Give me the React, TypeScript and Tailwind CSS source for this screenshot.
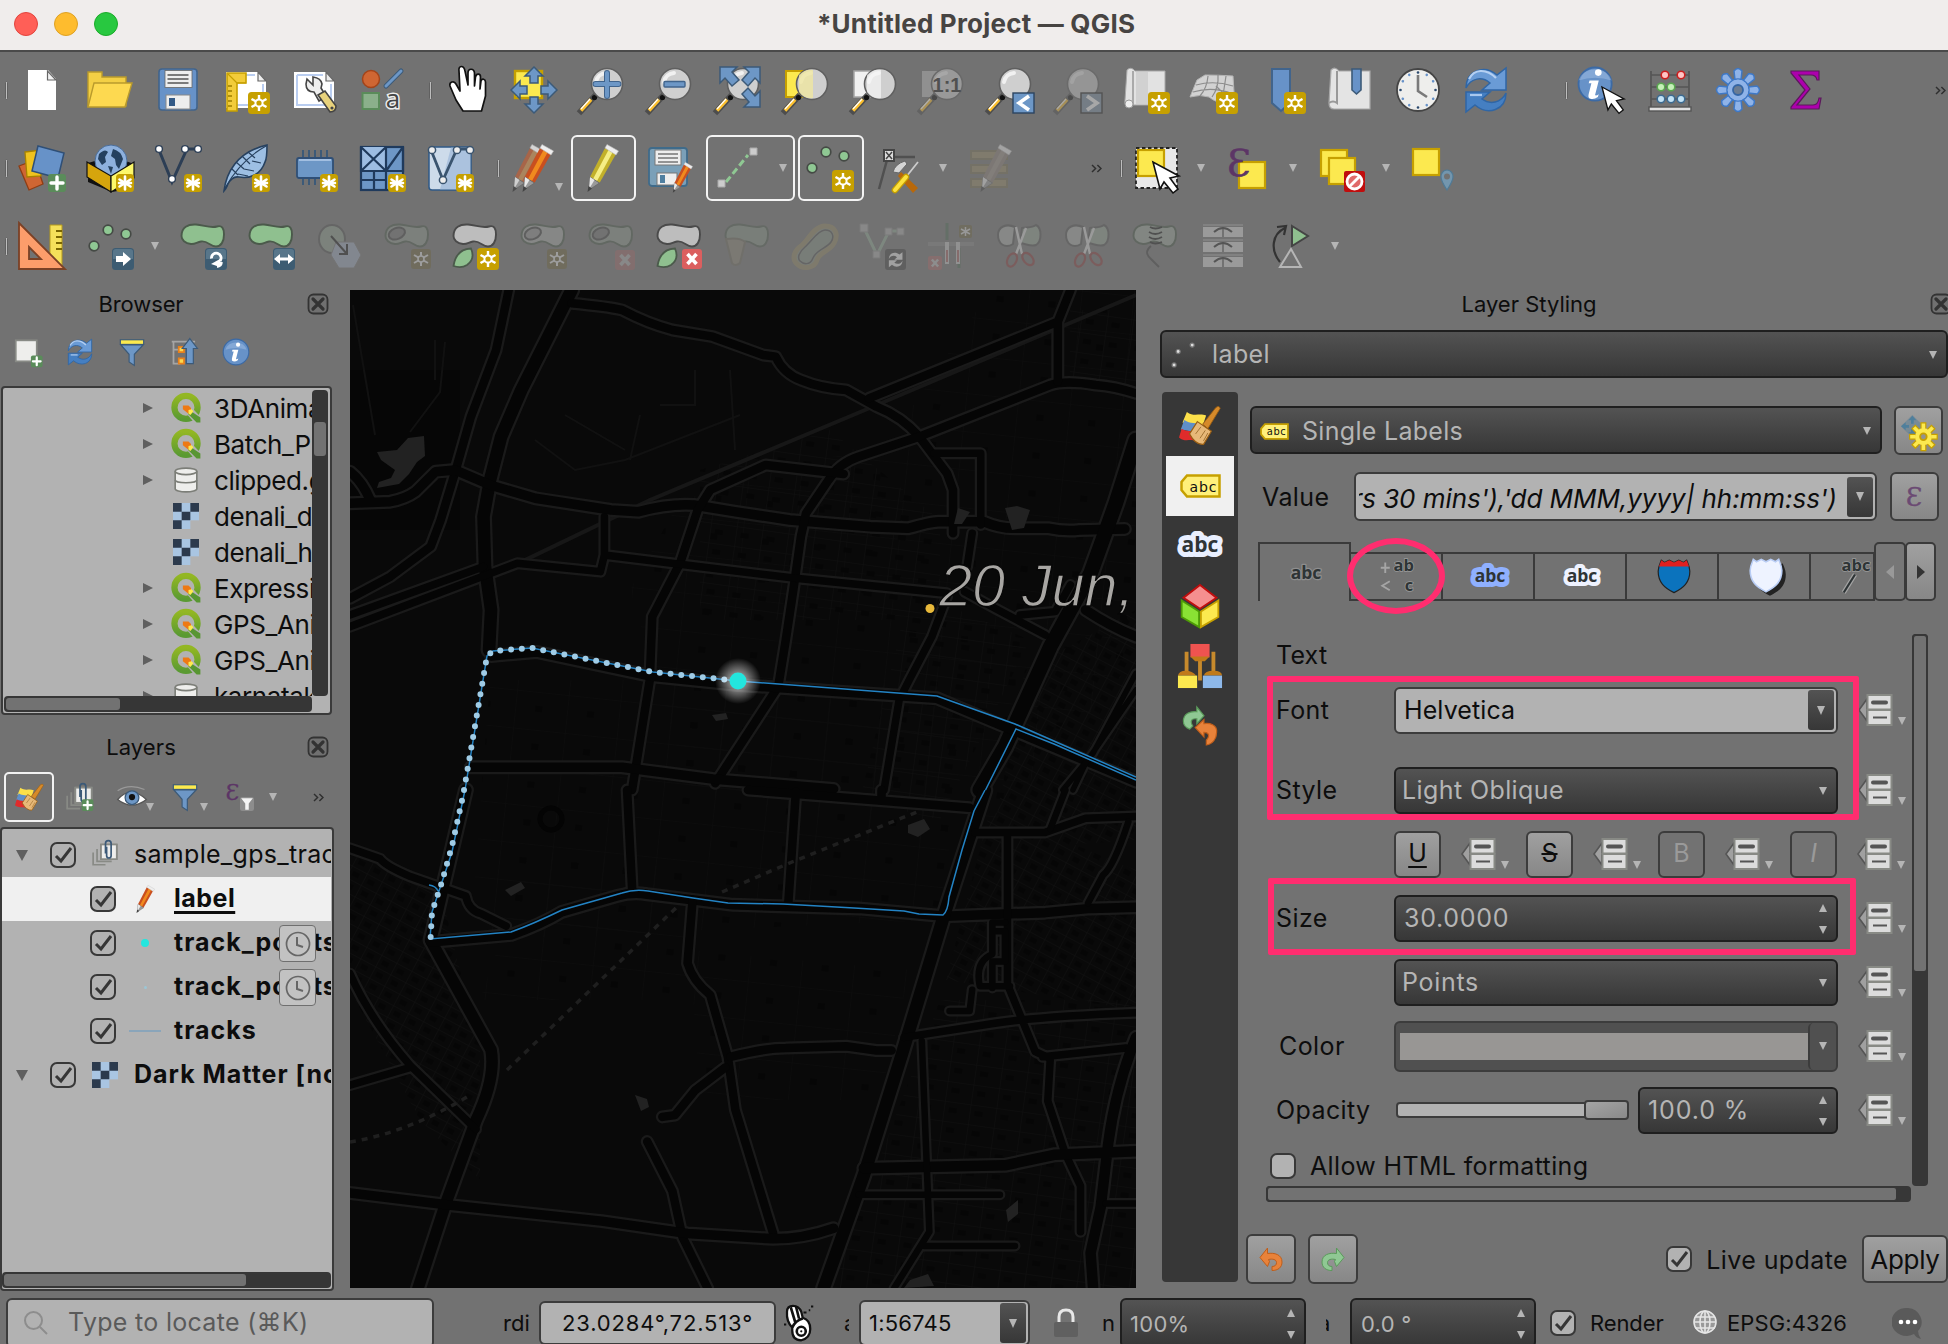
import React from "react";

type N = React.ReactNode;

/* ---------- shared icon pieces ---------- */
const Svg = ({ children, className = "size-12", vb = "0 0 48 48" }: { children: N; className?: string; vb?: string }) => (
  <svg viewBox={vb} className={`${className} shrink-0 overflow-visible`} fill="none">{children}</svg>
);

const Star = ({ x = 26, y = 26, s = 22, o = 1 }: { x?: number; y?: number; s?: number; o?: number }) => (
  <g transform={`translate(${x} ${y}) scale(${s / 22})`} opacity={o}>
    <rect width="22" height="22" rx="3.500" fill="#c6a000" />
    <path d="M11 3v16M3.500 7l15 8M18.500 7l-15 8" stroke="#fff" strokeWidth="2.400" />
    <circle cx="11" cy="11" r="3.600" fill="#c6a000" stroke="#fff" strokeWidth="2" />
  </g>
);
const Aster = () => (
  <g transform="translate(30 30)">
    <rect width="18" height="18" rx="3.500" fill="#c6a000" />
    <path d="M9 2.500v13M3.500 5.500l11 7M14.500 5.500l-11 7M3 9h12" stroke="#fff" strokeWidth="2.600" strokeLinecap="round" />
  </g>
);
const Plus = ({ x, y, s = 18 }: { x: number; y: number; s?: number }) => (
  <g transform={`translate(${x} ${y}) scale(${s / 18})`}>
    <rect width="18" height="18" rx="3" fill="#5a8c5a" />
    <path d="M9 3v12M3 9h12" stroke="#fff" strokeWidth="3.400" strokeLinecap="round" />
  </g>
);
const Lens = ({ children, back, o = 1, cx = 29 }: { children?: N; back?: N; o?: number; cx?: number }) => (
  <g opacity={o}>
    {back}
    <path d="M3 45L16 31" stroke="#4d4d4d" strokeWidth="6" strokeLinecap="square" />
    <path d="M3 44.500L13 33.500" stroke="#fcc02e" strokeWidth="3.600" />
    <path d="M3 43L12 33" stroke="#fff" strokeWidth="1.200" />
    <circle cx="16.500" cy="31.500" r="2.600" fill="#111" />
    <circle cx={cx} cy="18" r="15.500" fill="#cfcfcf" stroke="#5f5f5f" strokeWidth="1.600" />
    <path d={`M${cx - 11} 16a11 11 0 0 1 10-9`} stroke="#fff" strokeWidth="4" strokeLinecap="round" opacity=".7" />
    {children}
  </g>
);
const Page = () => (
  <>
    <path d="M4 6h32l8 9v27H4z" fill="#fff" />
    <path d="M36 6v9h8z" fill="#ededed" stroke="#666" strokeWidth="1.200" />
    <path d="M7 9h26M7 9v30h34V18" stroke="#b9cdf0" strokeWidth="2" />
  </>
);
const Pencil = ({ a = "#c94f1f", b = "#f08a1e", dx = 0, o = 1 }: { a?: string; b?: string; dx?: number; o?: number }) => (
  <g transform={`translate(${dx} 0)`} opacity={o}>
    <path d="M10 33L25 4l11 6L19.500 39z" fill={a} />
    <path d="M13 35L28.500 6l4 2.500L17 37z" fill={b} />
    <path d="M25 4l2-3.500 11.500 6.500-2.500 4z" fill="#eee" stroke="#bbb" strokeWidth=".6" />
    <path d="M10 33l9.500 6L9 46z" fill="#9a9a9a" stroke="#666" strokeWidth=".8" />
    <path d="M10 33l4.500 3L9 45z" fill="#e8e8e8" />
    <path d="M8.500 42l-1 6 4.500-3.500z" fill="#444" />
  </g>
);
const BLOB = "M2.500 14C2.500 5 9 2 17 2.500c8 .5 14 4 21 2 5-1.500 7 2 7 8 0 7-3 12-8 12-6 0-8-6-15-5-4 .5-6 3-10 2.500C6 21.500 2.500 18 2.500 14z";
const LEAF = "M2.500 44C4 34 9 27 20 26.500c3 7 1 13-4 16.500-4 2.500-9 2.500-13.500 1z";
const Blob = ({ f = "#8fc08f", s = "#4b5a4b", o = 1 }: { f?: string; s?: string; o?: number }) => (
  <path d={BLOB} fill={f} stroke={s} strokeWidth="1.900" opacity={o} />
);
const NavyBadge = ({ children, x = 26 }: { children: N; x?: number }) => (
  <g transform={`translate(${x} 26)`}>
    <rect width="22" height="22" rx="3.500" fill="#3d5c72" />
    <path d="M1 3.500Q1 1 4 1h14q3 0 3 2.500V11H1z" fill="#6b879b" opacity=".6" />
    {children}
  </g>
);
const XBadge = ({ x = 26, y = 26, s = 20, o = 1 }: { x?: number; y?: number; s?: number; o?: number }) => (
  <g transform={`translate(${x} ${y}) scale(${s / 20})`} opacity={o}>
    <rect width="20" height="20" rx="3" fill="#db5f5f" />
    <path d="M5.500 5l9 10M14.500 5l-9 10" stroke="#fff" strokeWidth="3.600" />
  </g>
);
const Refresh = () => (
  <>
    <path d="M4 22C4 5 22-2 35 9l9-7v22H20l8-7C20 10 9 12 4 22z" fill="#6a9bd6" stroke="#2f66a6" strokeWidth="1.500" />
    <path d="M7 13C12 3 24 2 34 12" stroke="#b5d0f2" strokeWidth="2.200" />
    <path d="M44 27c0 17-18 23-31 12l-9 7V26h24l-8 7c8 6 19 4 24-6z" fill="#457fc2" stroke="#2f66a6" strokeWidth="1.500" />
    <path d="M8 29h12" stroke="#a9c8ee" strokeWidth="2.200" />
  </>
);
const Funnel = () => (
  <>
    <rect x="4" y="3" width="40" height="8" fill="#fcea4e" stroke="#3c5a78" strokeWidth="2" />
    <path d="M5 12h38L28 28v19l-9-6V28z" fill="#6d97c6" stroke="#3c5a78" strokeWidth="2" />
  </>
);
const Info = ({ r = 22 }: { r?: number }) => (
  <>
    <circle cx="24" cy="24" r={r} fill="#6792c8" stroke="#3c6aa5" strokeWidth="2" />
    <path d="M6 20a19 18 0 0 1 36 0q-18-6-36 0z" fill="#a9c4e6" opacity=".45" />
    <circle cx="27.500" cy="11.500" r="3.600" fill="#fff" />
    <path d="M18 20h10l-4 16q1 1 4-1l-1 3q-4 3-8 2-3-1-2-5l3-12h-3z" fill="#fff" />
  </>
);
const Cursor = ({ x, y, s = 1 }: { x: number; y: number; s?: number }) => (
  <path transform={`translate(${x} ${y}) scale(${s})`} d="M0 0l7 27 4-7 9 11 5-4-8-11 9-2z" fill="#fff" stroke="#111" strokeWidth="1.600" />
);
const Box = ({ x, y }: { x: number; y: number }) => <rect x={x} y={y} width="26" height="26" fill="#fce94f" stroke="#c6a000" strokeWidth="2.200" />;
const Eps = ({ x = 4, y = 32, size = 40, fill = "#5c3566" }: { x?: number; y?: number; size?: number; fill?: string }) => (
  <text x={x} y={y} fontSize={size} fontFamily="DejaVu Serif, serif" fill={fill} stroke={fill} strokeWidth=".6">Ɛ</text>
);
const Brush = () => (
  <>
    <path d="M9 8c8 6 14 1 22 4l-4 12L4 20z" fill="#fce04a" />
    <path d="M6 17c7 5 13 2 22 6l-3 9L2 28z" fill="#5f8fc9" />
    <path d="M3 27c6 4 10 1 18 5l-2 9c-6-3-12 2-19-4z" fill="#e02b2b" />
    <path d="M27 22L42 3q4-3 5 1L33 27z" fill="#d68a2a" stroke="#9a5e12" strokeWidth="1" />
    <path d="M21 19l16 11-9 15q-9 1-16-12z" fill="#e7b878" stroke="#9a5e12" strokeWidth="1.300" />
    <path d="M19 33l6-8M24 38l6-9M28 41l5-9" stroke="#9a6a2a" strokeWidth="1" />
  </>
);
const Scissors = () => (
  <g opacity=".38">
    <path d="M3 13c0-8 8-12 17-8l-2 17c-8 5-15 0-15-9z" fill="#a9ada9" stroke="#555" strokeWidth="2" />
    <path d="M27 6c6-1 10 0 14-3 6 3 6 16 0 20-5 2-9-1-16-2z" fill="#93a393" stroke="#555" strokeWidth="2" />
    <path d="M21 5l6 27M31 6L21 32" stroke="#ddd" strokeWidth="2.400" />
    <ellipse cx="17" cy="38" rx="4.500" ry="7" transform="rotate(25 17 38)" stroke="#8c3c3c" strokeWidth="2.200" />
    <ellipse cx="33" cy="37" rx="4.500" ry="7" transform="rotate(-40 33 37)" stroke="#8c3c3c" strokeWidth="2.200" />
  </g>
);
const Pts = () => (
  <>
    {[[19, 8], [37, 12], [5, 24]].map(([a, b]) => (
      <circle key={a} cx={a} cy={b} r="4.800" fill="#8fc893" stroke="#454a45" strokeWidth="1.700" />
    ))}
  </>
);
const Undo = ({ c = "#e8823a", d = "#c05e1a" }: { c?: string; d?: string }) => (
  <path d="M2 21L17 2v11c14-2 29 2 29 17 0 11-8 17-20 17v-8c6 0 9-3 9-8 0-6-8-8-16-6l2 4-4 10z" fill={c} stroke={d} strokeWidth="2" />
);
const FadedStar = () => (
  <g transform="translate(28 27)"><rect width="20" height="20" rx="3" fill="#6e6540" /><path d="M10 3v14M3 6l14 8M17 6L3 14" stroke="#ddd" strokeWidth="2" /><circle cx="10" cy="10" r="3" fill="#6e6540" stroke="#ddd" strokeWidth="1.600" /></g>
);
const Ring = ({ fill }: { fill: string }) => (
  <ellipse cx="14" cy="11.500" rx="8.500" ry="5.500" transform="rotate(-22 14 12)" stroke="#444" strokeWidth="2" fill={fill} />
);
const Q = () => (
  <Svg className="size-[30px]">
    <defs>
      <linearGradient id="qg" x1="0" y1="0" x2="0" y2="1"><stop offset="0" stopColor="#93b723" /><stop offset="1" stopColor="#5a9a32" /></linearGradient>
    </defs>
    <circle cx="24" cy="23" r="18.500" stroke="url(#qg)" strokeWidth="10" />
    <path d="M24 24l8-2 15 16v9H37L24 32z" fill="#b2b2b2" />
    <path d="M29 27l18 12v8H41L27 33z" fill="#589632" />
    <path d="M19 20h9l4 4v4l-4 5-9-7z" fill="#ee7913" />
    <path d="M28 27l5-1 3 3-5 6-3-2z" fill="#fcea4e" />
  </Svg>
);
const Db = () => (
  <Svg className="size-[26px]">
    <path d="M4 8v32c0 3 9 6 20 6s20-3 20-6V8" fill="#eeeeec" stroke="#7c7e78" strokeWidth="3" />
    <ellipse cx="24" cy="8" rx="20" ry="6" fill="#eeeeec" stroke="#7c7e78" strokeWidth="3" />
    <path d="M4 24c0 3 9 5 20 5s20-2 20-5" stroke="#7c7e78" strokeWidth="3" />
  </Svg>
);
const Raster = () => (
  <svg viewBox="0 0 3 3" className="size-[26px] shrink-0">
    <rect width="3" height="3" fill="#a9c5e2" />
    <path d="M0 0h1v1H0zM2 0h1v1H2zM1 1h1v1H1zM0 2h1v1H0z" fill="#2c3a4d" />
    <rect x="2" y="2" width="1" height="1" fill="#b2b2b2" />
  </svg>
);
const AbcTag = ({ className = "h-6 w-[41px]" }: { className?: string }) => (
  <svg viewBox="0 0 41 24" className={`${className} shrink-0`}>
    <path d="M7 1.500h32.500v21H7L1.500 16V8z" fill="#fff07a" stroke="#c6a000" strokeWidth="2.500" />
    <text x="9.500" y="17.500" fontSize="14" fontFamily="DejaVu Sans, sans-serif" fill="#111" textLength="27">abc</text>
  </svg>
);
const AbcHalo = ({ halo, className = "h-9 w-14", fs = 21, w = 10 }: { halo: string; className?: string; fs?: number; w?: number }) => (
  <svg viewBox="0 0 56 36" className={`${className} shrink-0`}>
    <text x="28" y="24" textAnchor="middle" fontSize={fs} fontWeight="bold" fontFamily="Open Sans, sans-serif" stroke={halo} strokeWidth={w} strokeLinejoin="round" paintOrder="stroke" fill="#2e3436">abc</text>
  </svg>
);
const Clip = () => (
  <>
    <path d="M2 22v22h22M9 16v22h26M16 8h28v26H16z" stroke="#888a85" strokeWidth="3" />
    <rect x="16" y="8" width="28" height="26" fill="#eeeeec" stroke="#888a85" strokeWidth="3" />
    <path d="M24 24V6q0-5 5-5t5 5v22q0 4-4 4t-4-4V12" stroke="#3c5a78" strokeWidth="3" />
  </>
);

/* ---------- toolbar icons ---------- */
const row1a: N[] = [
  <><path d="M10 4h20l8 9v31H10z" fill="#fff" /><path d="M29.500 5v9H38z" fill="#f2f2f2" stroke="#666" strokeWidth="1.200" /></>,
  <><path d="M2 6h14v5h24v29H2z" fill="#f3cf45" stroke="#b99a2c" strokeWidth="1.400" /><path d="M8 17h38l-7 24H2z" fill="#fdd950" stroke="#b99a2c" strokeWidth="1.400" /></>,
  <>
    <rect x="5" y="3" width="38" height="41" rx="3" fill="#6792c8" stroke="#41648c" strokeWidth="1.600" />
    <rect x="11" y="4.500" width="27" height="17" fill="#eee" stroke="#666" strokeWidth=".8" />
    <path d="M13.500 9h21M13.500 13h21M13.500 17h21" stroke="#555" strokeWidth="1.600" />
    <rect x="12" y="29" width="24" height="14" fill="#eee" stroke="#888" /><rect x="15" y="32" width="6" height="8" fill="#335a86" />
  </>,
  <>
    <Page />
    <path d="M5 7h19v10H15v28H5z" fill="#f2cc3a" stroke="#c6a000" strokeWidth="1.600" />
    <path d="M6 8l9 9M15 17h9" stroke="#c6a000" strokeWidth="1.200" />
    <path d="M6 20h4M6 25h4M6 30h4M6 35h4M6 40h4" stroke="#9c7d00" strokeWidth="1.600" />
    <Star />
  </>,
  <>
    <Page />
    <path d="M17 13l6 6v-8q8 1 9 7l-1 4 5 8-7 5-5-9q-8 0-8-8z" fill="#eee" stroke="#444" strokeWidth="1.600" />
    <path d="M28 29l7-4 11 15q0 6-6 6z" fill="#e8d27c" stroke="#444" strokeWidth="1.600" /><circle cx="42" cy="42" r="1.600" fill="#444" />
  </>,
  <>
    <circle cx="13" cy="13" r="8.500" fill="#cf6633" stroke="#a2441a" strokeWidth="1.500" />
    <path d="M28 20L43 5" stroke="#3c5a78" strokeWidth="5" strokeLinecap="round" /><path d="M28 20L43 5" stroke="#6d97c6" strokeWidth="3" strokeLinecap="round" />
    <rect x="4.500" y="27" width="16.500" height="16" fill="#8bb08b" stroke="#5a8c5a" strokeWidth="2" />
    <text x="35" y="42" fontSize="26" textAnchor="middle" fontFamily="Open Sans, sans-serif" fill="#444" stroke="#eee" strokeWidth="3" paintOrder="stroke">a</text>
  </>,
];
const arrowUp = "M24 1l9 9h-5v7h-8v-7h-5z";
const row1b: N[] = [
  <path d="M21 45L14 34 8 20c-1-4 4-6 6-2l4 7L17 5c-1-6 5-6 6 0l3 14V7c0-5 6-5 6.500 0v13l1-9c1-4 5-3.500 5 0l-.5 12 1-8c1-3 4.500-2 4.500 1v14l-4 15z" fill="#fff" stroke="#111" strokeWidth="1.700" strokeLinejoin="round" />,
  <>
    <rect x="5" y="5" width="27" height="27" fill="#fce94f" stroke="#c6a000" strokeWidth="2.400" />
    {[0, 90, 180, 270].map((r) => <path key={r} d={arrowUp} transform={`rotate(${r} 24 24)`} fill="#6d97c6" stroke="#3c5a78" strokeWidth="1.500" />)}
  </>,
  <Lens><path d="M29 7v23M17.500 18h23" stroke="#41648c" strokeWidth="6" strokeLinecap="round" /><path d="M29 7v23M17.500 18h23" stroke="#6d97c6" strokeWidth="4" strokeLinecap="round" /></Lens>,
  <Lens><rect x="18" y="15.500" width="21" height="5.500" rx="1" fill="#6d97c6" stroke="#41648c" strokeWidth="1.400" /></Lens>,
  <Lens>
    {["M6 1h17l-5 5 7 8-7 6-7-8-5 5z", "M46 1H30l5 5-7 8 6 6 7-8 5 5z", "M46 41H30l5-5-7-8 6-6 7 8 5-5z"].map((d) => <path key={d} d={d} fill="#6d97c6" stroke="#3c5a78" strokeWidth="1.500" />)}
  </Lens>,
  <Lens back={<rect x="4" y="5" width="26" height="26" fill="#fce94f" stroke="#c6a000" strokeWidth="2" />} cx={30}><path d="M17 9q6-6 14-5v28q-9 1-14-6z" fill="#efe6a0" opacity=".8" /></Lens>,
  <Lens back={<rect x="4" y="5" width="26" height="26" fill="#f0f0f0" stroke="#a5a5a5" strokeWidth="1.500" />} cx={30}><path d="M17 9q6-6 14-5v28q-9 1-14-6z" fill="#f5f5f5" opacity=".7" /></Lens>,
  <Lens o={0.42} back={<rect x="4" y="5" width="26" height="26" fill="#bbb" />} cx={29}><text x="29" y="26" fontSize="20" fontWeight="bold" textAnchor="middle" fontFamily="Liberation Sans, sans-serif" fill="#222">1:1</text></Lens>,
  <><Lens /><rect x="27" y="27" width="21" height="20" fill="#6d97c6" stroke="#2c4460" strokeWidth="1.400" /><path d="M43 30l-10 7 10 7" stroke="#fff" strokeWidth="3.600" /></>,
  <g opacity=".38"><Lens /><rect x="27" y="27" width="21" height="20" fill="#7c8fa5" stroke="#222" strokeWidth="1.400" /><path d="M33 30l10 7-10 7" stroke="#fff" strokeWidth="3.600" /></g>,
  <><path d="M5 4q4-4 8 1h30v34H6q-4 1-3-5z" fill="#e2e2e2" stroke="#a8a8a8" /><path d="M11 5v34" stroke="#aaa" strokeWidth="2" /><path d="M14 6h12v32H14z" fill="#c6c6c6" opacity=".6" /><circle cx="7" cy="38" r="4" fill="#eee" stroke="#999" /><Star /></>,
  <><path d="M0 31L7 14l8-5q14 0 28 1l1 16-6 12q-12-1-19-7-9-3-19 0z" fill="#d2d2d2" stroke="#b5b5b5" /><path d="M3 26q20-6 40 2M6 19q18-5 37 1M18 10q-1 12-8 20M28 9q1 12-6 22M36 10l-4 26M26 20l8 8" stroke="#8c8c8c" strokeWidth="1.200" /><Star /></>,
  <><path d="M14 3h18v34l-9 8-9-8z" fill="#6792c8" stroke="#41648c" strokeWidth="2" /><Star /></>,
  <><path d="M5 4q4-4 8 1h31v38H8q-5 0-5-6z" fill="#e4e4e4" stroke="#a8a8a8" strokeWidth="1.200" /><path d="M11 5v32q-4-3-8 0" stroke="#999" strokeWidth="2" /><path d="M26 3h9v21l-4.500 4-4.500-4z" fill="#6792c8" stroke="#3c5a78" strokeWidth="1.600" /></>,
  <>
    <circle cx="24" cy="24" r="21" fill="#eeeeec" stroke="#454545" strokeWidth="1.800" />
    {[0, 30, 60, 90, 120, 150, 180, 210, 240, 270, 300, 330].map((r) => <circle key={r} cx="24" cy="6.500" r="1.300" fill={r % 90 ? "#6792c8" : "#2c4a6e"} transform={`rotate(${r} 24 24)`} />)}
    <path d="M24 9v16l9 6" stroke="#7a7a7a" strokeWidth="2.600" />
  </>,
  <Refresh />,
];
const row1c: N[] = [
  <><g transform="translate(-5 -4) scale(.92)"><Info r={18} /></g><Cursor x={24} y={21} s={0.85} /></>,
  <>
    <path d="M5 5v36M43 5v36M5 9h38M5 21h38M5 33h38" stroke="#555" strokeWidth="1.700" />
    {[[19, "#cc1f1f", "#ffc4c4", 9], [35, "#cc1f1f", "#ffc4c4", 9], [15, "#5aa850", "#c5f0b8", 21], [25, "#5aa850", "#c5f0b8", 21], [15, "#3c6a90", "#c2e2f5", 33], [25, "#3c6a90", "#c2e2f5", 33], [35, "#3c6a90", "#c2e2f5", 33]].map(([x, s, f, y]) => (
      <circle key={`${x}-${y}`} cx={x} cy={y} r="3.800" fill={f as string} stroke={s as string} strokeWidth="1.600" />
    ))}
    <rect x="3" y="41" width="42" height="4" fill="#e0e0e0" stroke="#555" strokeWidth="1.400" />
  </>,
  <>
    {[0, 45, 90, 135, 180, 225, 270, 315].map((r) => <path key={r} d="M21 14l-1-9q4-5 8 0l-1 9z" transform={`rotate(${r} 24 24)`} fill="#8fb3e8" stroke="#3e78c6" strokeWidth="1.500" />)}
    <circle cx="24" cy="24" r="11" fill="#8fb3e8" stroke="#3e78c6" strokeWidth="1.500" /><circle cx="24" cy="24" r="10.400" fill="#8fb3e8" /><circle cx="24" cy="24" r="5" fill="#6b7c92" stroke="#3465a4" strokeWidth="1.800" />
  </>,
  <path d="M9 5h28v9h-2q-1-5-6-5H17l11 14-13 16h16q5 0 6-7h2l-2 11H9v-2l14-17L9 7z" fill="#ad00ad" stroke="#5a1a5a" strokeWidth="1.200" />,
];
const row2a: N[] = [
  <>
    <path d="M1 22l16-6 8 24-14 6z" fill="#cf6633" stroke="#8f3d14" strokeWidth="1.300" />
    <path d="M7 8l16-2v26l-14 1z" fill="#efc31f" stroke="#a88200" strokeWidth="1.300" />
    <path d="M20 2l26 7-6 25-26-7z" fill="#6792c8" stroke="#2f4f76" strokeWidth="1.500" />
    <Plus x={30} y={30} />
  </>,
  <>
    <path d="M2 19l24-7 22 8v24L26 48 2 38z" fill="#111" />
    <circle cx="25" cy="17" r="16" fill="#8db0dd" stroke="#4a6d99" />
    <path d="M13 10q6-6 9-2l-3 5 1 5-4 3-4-6zM27 5q8 2 10 10l-4 10-3-4-1-6-4-3zM22 22l5 1-2 7z" fill="#24405f" />
    <path d="M1 18l24 14v16L1 33z" fill="#d6a50d" stroke="#111" strokeWidth="1.200" /><path d="M25 32l23-14v16L25 48z" fill="#fdf86b" stroke="#111" strokeWidth="1.200" />
    <Aster />
  </>,
  <>
    <path d="M5 6l13 32L33 5h11" stroke="#2c3e55" strokeWidth="3" />
    {[[5, 5], [31, 5], [44, 5], [18, 35]].map(([x, y]) => <circle key={x} cx={x} cy={y} r="3.400" fill="#fff" stroke="#2c3e55" strokeWidth="1.400" />)}
    <Aster />
  </>,
  <>
    <path d="M2 47C4 30 14 8 45 1c0 8 0 14-2 17-4 12-14 17-26 15-6-1-9 3-11 7-1 2-2 5-4 7z" fill="#9dbfe3" stroke="#27415f" strokeWidth="1.600" />
    <path d="M3 44C12 28 26 12 44 2M14 18l8 7M20 12l8 8M10 25l6 6M26 8l7 6M22 25l10 2M16 30l10 2M30 17l9 2" stroke="#27415f" strokeWidth="1.200" />
    <Aster />
  </>,
  <>
    <path d="M13 6v8M19 6v8M25 6v8M31 6v8M37 6v8M13 34v7M19 34v7M25 34v7" stroke="#3c5a78" strokeWidth="2" />
    <rect x="7" y="14" width="36" height="20" rx="2" fill="#6d97c6" stroke="#2f4f76" strokeWidth="1.800" /><path d="M9 16h32" stroke="#b5cdea" strokeWidth="1.500" />
    <Aster />
  </>,
  <>
    <rect x="3" y="3" width="42" height="43" fill="#6d97c6" stroke="#1f3a5c" strokeWidth="2.200" /><path d="M3 3h26v24H3z" fill="#9dbde2" />
    <path d="M3 3v24h42V3M28 3v43M3 3l25 24M28 3L3 27M28 27L45 3M3 36h25M16 27v19" stroke="#1f3a5c" strokeWidth="2.200" />
    <Aster />
  </>,
  <>
    <rect x="3" y="3" width="42" height="43" rx="3" fill="#cddbea" stroke="#2f5a88" strokeWidth="1.500" /><path d="M25 3.500h19.500v42H14z" fill="#9cb8d8" opacity=".7" />
    <path d="M5 6l12 30L31 5h13" stroke="#3a546f" strokeWidth="2.800" />
    {[[6, 6], [31, 6], [44, 6], [17, 36]].map(([x, y]) => <circle key={x} cx={x} cy={y} r="3.600" fill="#eee" stroke="#3a546f" strokeWidth="1.500" />)}
    <Aster />
  </>,
];
const Floppy = (
  <g>
    <rect x="2" y="4" width="38" height="38" rx="3" fill="#7ba0b8" stroke="#3f6b8a" strokeWidth="1.800" />
    <rect x="8" y="6" width="26" height="15" fill="#eee" stroke="#777" /><path d="M11 10h20M11 14h20M11 18h20" stroke="#777" strokeWidth="1.600" />
    <rect x="10" y="29" width="20" height="12" fill="#eee" stroke="#777" /><rect x="13" y="31" width="5" height="8" fill="#4f7fa0" />
    <g transform="translate(21 18) scale(.64)"><Pencil /></g>
  </g>
);
const row3: N[] = [
  <><Blob /><NavyBadge><path d="M12 18.500q4-.5 4.500-4.500M6.500 10.500a4.800 4.800 0 1 1 8.500 2.500" stroke="#fff" strokeWidth="2.800" /><path d="M6 16l9-5v8z" fill="#fff" /></NavyBadge></>,
  <><Blob /><NavyBadge><path d="M5 11h12" stroke="#fff" strokeWidth="3" /><path d="M7 6l-6 5 6 5zM15 6l6 5-6 5z" fill="#fff" /></NavyBadge></>,
  <g opacity=".42"><ellipse cx="17" cy="17" rx="13" ry="14" fill="#8a9a8a" stroke="#555" strokeWidth="2" /><path d="M21 20h18l7 13-7 13H24l-8-13z" fill="#9aa6b8" stroke="#777" /><path d="M16 14l16 18M32 22v10h-8" stroke="#222" strokeWidth="2" /></g>,
  <g opacity=".4"><Blob f="#8d958d" /><Ring fill="#727272" /><FadedStar /></g>,
  <><Blob f="#bdbdbd" s="#4a4a4a" /><path d={LEAF} fill="#8fc08f" stroke="#4b5a4b" strokeWidth="1.800" /><Star /></>,
  <g opacity=".4"><Blob f="#a5a8a5" /><Ring fill="#909090" /><FadedStar /></g>,
  <g opacity=".4"><Blob f="#8d958d" /><Ring fill="#727272" /><XBadge x={28} y={28} o={0.4} /></g>,
  <><Blob f="#bdbdbd" s="#4a4a4a" /><path d={LEAF} fill="#8fc08f" stroke="#4b5a4b" strokeWidth="1.800" /><XBadge x={27} y={27} /></>,
  <g opacity=".32"><Blob f="#8a9a8a" /><path d="M3 17q14-2 19 3l-5 21q-5 4-8 0z" fill="#8f8878" stroke="#6e6a5a" strokeWidth="2" /></g>,
  <g opacity=".28"><path d="M34 4c10 0 14 8 9 17S28 30 26 38 12 48 6 42s-2-14 4-18S23 4 34 4z" fill="#8a9a8a" stroke="#a0905f" strokeWidth="5" /><path d="M34 8c7 0 10 6 6 12S25 28 22 36s-10 6-13 3-1-9 5-14S27 8 34 8z" stroke="#444" strokeWidth="1.500" /></g>,
  <g opacity=".4"><path d="M5 6l13 27L30 9h12" stroke="#8fa894" strokeWidth="3" /><path d="M1 2h8v8H1zM26 6h7v7h-7zM38 6h7v7h-7zM14 29h7v7h-7z" fill="#aaa" stroke="#888" /><rect x="26" y="27" width="21" height="21" rx="3" fill="#444" /><g transform="translate(28.500 29.500) scale(.34)"><path d="M4 22C4 5 22-2 35 9l9-7v22H20l8-7C20 10 9 12 4 22zM44 27c0 17-18 23-31 12l-9 7V26h24l-8 7c8 6 19 4 24-6z" fill="#e8e8e8" /></g></g>,
  <g opacity=".35"><path d="M1 22h46" stroke="#888" strokeWidth="4" /><path d="M20 1v17M32 26v20" stroke="#4d6b55" strokeWidth="3" /><path d="M20 20v22M31 20v22" stroke="#ccc" strokeWidth="4" /><path d="M20 28v12M31 28v12" stroke="#a04040" strokeWidth="1.500" /><g transform="translate(32 3)"><rect width="13" height="13" rx="2" fill="#6e6540" /><path d="M6.500 2v9M2 4l9 5M11 4L2 9" stroke="#ddd" strokeWidth="1.500" /></g><XBadge x={1} y={34} s={14} o={0.55} /></g>,
  <Scissors />,
  <Scissors />,
  <g opacity=".42"><Blob f="#99a399" /><path d="M19 5q5 3 12 0M18 10q6 4 13 0M18 15q6 4 13 0M19 20q5 3 12 0" stroke="#222" strokeWidth="1.800" /><path d="M20 24q-8 6 0 13l8 8" stroke="#444" strokeWidth="1.800" /></g>,
  <>{[5, 20, 35].map((y) => <g key={y} opacity=".75"><path d={`M4 ${y}h19v10H4zM25 ${y}h19v10H25z`} fill="#a8a8a8" /><path d={`M4 ${y - 2}h40`} stroke="#8e8e8e" strokeWidth="1.500" /><path d={`M15 ${y + 5}q9-8 18 0`} stroke="#4c4c4c" strokeWidth="2" /></g>)}</>,
  <><path d="M13 40C3 28 5 12 18 6M10 5l9-1-2 9" stroke="#333" strokeWidth="2.200" /><path d="M25 4l16 10-16 10z" fill="#8fc08f" stroke="#444" strokeWidth="2" /><path d="M24 27L13 45h21z" stroke="#b5b5b5" strokeWidth="2" /></>,
];

/* ---------- layout helpers ---------- */
const Slot = ({ children, className = "w-[68px]" }: { children: N; className?: string }) => (
  <div className={`${className} flex shrink-0 items-center justify-center`}><Svg>{children}</Svg></div>
);
const Sep = ({ className = "w-2" }: { className?: string }) => (
  <div className={`${className} flex shrink-0 justify-end`}><div className="h-[19px] w-[3px] rounded-full border border-[#606060] bg-[#bdbdbd]" /></div>
);
const Tri = ({ className = "w-2 h-2 text-[#b5b5b5]", up = false }: { className?: string; up?: boolean }) => (
  <svg viewBox="0 0 10 10" preserveAspectRatio="none" className={`${className} shrink-0`}><path d={up ? "M5 0l5 10H0z" : "M5 10L0 0h10z"} fill="currentColor" /></svg>
);
const Drop = ({ className = "w-5" }: { className?: string }) => (
  <div className={`${className} flex shrink-0 justify-center`}><Tri /></div>
);
const More = ({ className }: { className: string }) => (
  <svg viewBox="0 0 12 10" className={`${className} h-[9px] w-[11px] shrink-0`} fill="none" stroke="#2f2f2f" strokeWidth="1.600"><path d="M1 1l4 4-4 4M7 1l4 4-4 4" /></svg>
);
const CloseBox = () => (
  <svg viewBox="0 0 22 22" className="size-[22px] shrink-0">
    <rect x="1.500" y="1.500" width="19" height="19" rx="5" fill="#707070" stroke="#333" strokeWidth="1.800" />
    <path d="M6 6l10 10M16 6L6 16" stroke="#333" strokeWidth="3.200" strokeLinecap="round" />
  </svg>
);
const Check = ({ on = true }: { on?: boolean }) => (
  <div className="size-[26px] shrink-0 rounded-[7px] border-2 border-[#383838] bg-[#b2b2b2]">
    {on && <svg viewBox="0 0 22 22" className="size-full"><path d="M4 12l5 5L19 4" stroke="#363636" strokeWidth="3" fill="none" /></svg>}
  </div>
);
const DarkBox = ({ children, className }: { children: N; className: string }) => (
  <div className={`${className} flex shrink-0 items-center rounded-[6px] border-2 border-[#1f1f1f] bg-gradient-to-b from-[#535353] to-[#373737] pt-[2px] text-[#b5b5b5]`}>{children}</div>
);
const Btn = ({ children, className, off = false }: { children: N; className: string; off?: boolean }) => (
  <div className={`${className} flex shrink-0 items-center justify-center rounded-[6px] border-2 border-[#3c3c3c] ${off ? "bg-[#727272] text-[#9a9a9a]" : "bg-gradient-to-b from-[#a0a0a0] to-[#878787] text-[#0d0d0d]"}`}>{children}</div>
);
const Spin = () => (
  <div className="mr-[9px] ml-auto flex flex-col gap-[14px]"><Tri up className="h-2 w-2" /><Tri className="h-2 w-2" /></div>
);
const DropBtn = () => (
  <div className="mr-[2px] ml-auto flex h-[40px] w-[26px] shrink-0 items-center justify-center rounded-[3px] bg-gradient-to-b from-[#535353] to-[#373737]"><Tri className="h-[9px] w-2 text-[#b5b5b5]" /></div>
);
const Override = ({ drop = true }: { drop?: boolean }) => (
  <div className="flex w-[50px] shrink-0 items-center">
    <svg viewBox="0 0 36 34" className="-ml-px h-[34px] w-9">
      <path d="M10 6L2 17l8 11z" fill="#a0a0a0" stroke="#555" strokeWidth="1.600" />
      <rect x="10.500" y="2" width="24" height="14.500" fill="#dcdcdc" stroke="#888a85" strokeWidth="2" />
      <rect x="10.500" y="17" width="24" height="15" fill="#dcdcdc" stroke="#888a85" strokeWidth="2" />
      <path d="M16 9.500h13" stroke="#555" strokeWidth="4" strokeLinecap="round" /><path d="M16 24.500h14" stroke="#555" strokeWidth="2" />
    </svg>
    {drop && <Tri className="mt-[22px] ml-[5px] h-2 w-2 text-[#b5b5b5]" />}
  </div>
);

/* ---------- map ---------- */
const roadsTop = [
  ["M315 0L290 180 240 380 208 550 180 690 160 770 80 860 0 925", 6],
  ["M440 0L400 120 340 300 300 440 278 570 265 680 268 830 280 960 276 1080", 10],
  ["M0 545q25 30 40 85M0 640l80-5q30-8 50-30l40-60 38-5 70 45 90 40 150 35 55 5q60-25 110-20l80 20 110 25 160 20 75 5q45-20 60-20l90 0q30 20 60 20l70 0q30 10 60 5l90-3", 7],
  ["M440 40q70 10 100 20 50 40 100 60l80 20 100 55 25 5q15 50 50 70 40 25 90 30l60 50q50 30 85 90l55 110 12 50v130", 6],
  ["M1560 310q-40-20-80-25-60-15-90 0L1130 440l-120 60q-40 20-60 70l-45 100L895 740 880 900 865 1050 850 1190 725 1480", 6],
  ["M1030 325L1405 95 1430 0M1405 95v180M980 552L825 525 715 600 690 660 655 820 600 980 595 1170 560 1500", 6],
  ["M505 680v115l-8 50-165-25L0 1010M0 975L265 830M505 795l380 70 300 45M1160 490h92v215M1235 730L1225 830M1185 920L1155 1040 1110 1170 1090 1230 1060 1500", 5],
  ["M1560 450L1520 640 1470 850 1390 1070 1300 1370 1250 1500", 12],
  ["M1220 905l60 50 100 80M1330 975l70-10 30-80", 5],
  ["M1460 960q50 50 100 80M280 1098l90-12 230 73 170 26 395 40 395 250M240 1432h300l180 35 240 30", 7],
  ["M1560 1200l-100 220-25 80M1560 1150l-85 240-60 110", 3],
] as const;
const roadsBot = [
  ["M230 0L160 425l120 310q10 80-30 200L190 1170l-55 240", 9],
  ["M0 165l60 30q10 20 60 50l110 55q5 40 30 50l50 35M0 520q40 130 120 260l130 180M0 835l120-50", 5],
  ["M160 430l160-20q60-30 100-65l110-45q30-12 60-5l170 30 250 10 170 22 200-10 90-12 120-4", 7],
  ["M550 0l10 280M885 5l-15 315M790 0l440 50M1055 0v20M680 310l-10 180q10 50 45 90l35 175 15 150 75 350", 6],
  ["M755 755q70-25 110-25l120-5 60 12h30M745 785l-60 65-40 70-25 5M590 995l50 140 20 130 50 145", 6],
  ["M0 1140L200 1175l300 45 170 35 170 15q60 0 120-30", 7],
  ["M1260 0L1180 350l-85 400-75 340-80 320", 10],
  ["M1100 700l180-40q90-20 280-30M1240 120h140l80-40 100-5M1305 120v430l55 190 30 20-5 120 35 150 30 90v130M1375 755l165-25", 5],
  ["M1560 700q-40 140-55 300l-15 180-20 130 5 100M1020 1070l280-8 100-30 160-10", 8],
  ["M1135 710l15 540-70 160M1010 1145h280M1140 1290h180M1500 1170h60M1420 0l-30 110M1545 90q-30 130-50 150l-30 80M1300 375h-25v90q-35 20-25 90h60M1235 565l-5 60h-40M1275 400h25v85h-25v75", 4],
] as const;
const NS = { vectorEffect: "non-scaling-stroke" as const };
const MapView = () => {
  const layer = (extra: number, color: string) => (
    <g stroke={color} fill="none" strokeLinejoin="round" strokeLinecap="round">
      <g transform="scale(.5038 .3333)">{roadsTop.map(([d, w]) => <path key={d} d={d} strokeWidth={w + extra} {...NS} />)}</g>
      <g transform="translate(0 500) scale(.5038 .3534)">{roadsBot.map(([d, w]) => <path key={d} d={d} strokeWidth={w + extra} {...NS} />)}</g>
    </g>
  );
  return (
    <svg viewBox="0 0 786 998" className="h-[998px] w-[786px] shrink-0">
      <defs>
        <pattern id="g1" width="26" height="20" patternUnits="userSpaceOnUse" patternTransform="rotate(8)"><path d="M0 0h26M0 0v20" stroke="#141414" strokeWidth="1.500" /><rect x="5" y="6" width="8" height="5" fill="#050505" /></pattern>
        <pattern id="g2" width="17" height="13" patternUnits="userSpaceOnUse" patternTransform="rotate(28)"><path d="M0 0h17M0 0v13" stroke="#151515" strokeWidth="1.500" /><rect x="4" y="4" width="7" height="5" fill="#050505" /></pattern>
        <pattern id="g3" width="52" height="38" patternUnits="userSpaceOnUse" patternTransform="rotate(6)"><path d="M0 0h52M0 0v38" stroke="#101010" strokeWidth="1.500" /><rect x="20" y="14" width="7" height="6" fill="#050505" /></pattern>
        <radialGradient id="glow"><stop offset=".3" stopColor="#fff" stopOpacity=".55" /><stop offset="1" stopColor="#fff" stopOpacity="0" /></radialGradient>
      </defs>
      <rect width="786" height="998" fill="#090909" />
      <path d="M0 80h110v160H0z" fill="#060606" />
      <g opacity=".6">
        <path d="M330 210l210-60 100-150h146v370L620 560l-280-60-60-200z" fill="url(#g3)" />
        <path d="M350 180l130-40 110 90v100H350zM560 300l120 50-90 180-80-20zM720 20h66v80h-66z" fill="url(#g1)" />
        <path d="M140 390h480l-30 240-470 20z" fill="url(#g3)" />
        <path d="M675 380l111-60v230L640 560zM640 520l146 60v140l-190-30zM0 560l90 40 40 160 0 130-60-60-70-130z" fill="url(#g2)" />
        <path d="M590 710h196v288H480z" fill="url(#g1)" />
        <path d="M180 560l160 20v130H130zM340 660l220 20-30 130H350z" fill="url(#g3)" />
      </g>
      <path d="M150 282L300 210 515 120 786 5" stroke="#171717" strokeWidth="4" fill="none" />
      <path d="M60 142l30-40 5-50M85 50v40M185 150l40 30 50-10 115-45M345 80v35h-35M380 80l5 80M3 15l22 130M215 125l60 35M290 125l-10 45" stroke="#111" strokeWidth="2" fill="none" />
      {layer(7, "#1a1a1a")}
      {layer(2.5, "#050505")}
      <g stroke="#1f1f1f" strokeWidth="3.500" strokeDasharray="6 6" fill="none">
        <path d="M157 780L330 614M372 602l70-30 130-52M0 852q60-10 122-48" />
      </g>
      <g fill="#222">
        <path d="M58 148l16-2 1 20-8 6-8 12-10 10-22 4 2-6 12-4 4-8-14-10-4-8 20-2zM655 218l12-2 13 4-6 18-12 2zM608 218l12 4-8 12-8 0zM362 425l14-2 2 6-12 2zM558 535l16-6 6 10-12 8-10-4zM155 600l16-8 4 6-14 8zM285 805l12 4 2 8-8 4zM656 920l12-10 0 14-10 8zM560 990l18-6 6 12-30 2z" />
      </g>
      <circle cx="201" cy="529" r="11" stroke="#040404" strokeWidth="5" fill="none" />
      <g fill="none" stroke="#2383c4" strokeWidth="1.500">
        <path d="M115 500L137 366l6-5 39-3 70 14 51 10 85 9 199 15 78 28 121 53M635.500 500L666 439l38 15 82 36" />
        <path d="M115 500L102 562 91 595 82 622l-2 27 81-7q22-8 51-22l60-17q12-4 26-2l45 7 35 5 55 1 71 4 50 3 15 3 24 1q5-4 6-18l13-47 12-39 11-21M79 595q7 1 9 6" />
      </g>
      <path d="M385 390.500L303 382 252 372 182 358 143 361 137 366 113 506 102 556 91 595 82 622 80.500 650" fill="none" stroke="#a0cce6" strokeWidth="6" strokeLinecap="round" strokeDasharray="0 10.800" />
      <circle cx="388" cy="391" r="23" fill="url(#glow)" />
      <circle cx="388" cy="391" r="8.500" fill="#23e6de" />
      <circle cx="580" cy="318.500" r="4.500" fill="#e8b93a" />
      <text x="589" y="316" fontFamily="Liberation Sans, sans-serif" fontStyle="italic" fontSize="59.500" fill="#a8a6a3" stroke="#070707" strokeWidth="1.300">20 Jun,</text>
    </svg>
  );
};

/* ---------- panels ---------- */
const files: [string, "q" | "d" | "r"][] = [["3DAnimation", "q"], ["Batch_Pro", "q"], ["clipped.gpkg", "d"], ["denali_dem", "r"], ["denali_hs", "r"], ["Expression", "q"], ["GPS_Anim", "q"], ["GPS_Anim", "q"], ["karnataka", "d"]];

const Browser = () => (
  <section className="h-[431px]">
    <header className="flex h-10 items-center pr-[5px]">
      <h2 className="flex-1 pr-[25px] text-center text-[22px] tracking-[-0.1px]">Browser</h2>
      <CloseBox />
    </header>
    <div className="flex h-[62px] items-center gap-[24px] pb-[6px] pl-[14px]">
      <Svg className="size-7"><rect x="3" y="4" width="36" height="36" fill="#eeeeec" stroke="#888a85" strokeWidth="3" /><Plus x={29} y={30} s={20} /></Svg>
      <Svg className="size-7"><Refresh /></Svg>
      <Svg className="size-7"><Funnel /></Svg>
      <Svg className="size-7"><path d="M3 6h40M6 6v38h12M6 20h12" stroke="#a5a5a5" strokeWidth="3" /><path d="M15 15h9v9h-9zM15 35h9v9h-9z" fill="#fcd94f" stroke="#e8801c" strokeWidth="3" /><path d="M34 1l13 17h-7v26H28V18h-7z" fill="#6d97c6" stroke="#3c5a78" strokeWidth="2" /></Svg>
      <Svg className="size-7"><Info /></Svg>
    </div>
    <div className="ml-px h-[329px] w-[331px] overflow-hidden rounded-[4px] border-2 border-[#3a3a3a] bg-[#b2b2b2]">
      <div className="flex h-[308px] pt-[2px]">
        <ul className="h-[306px] w-[309px] overflow-hidden">
          {files.map(([name, kind], i) => (
            <li key={i} className="flex h-9 items-center pl-[140px]">
              <svg viewBox="0 0 10 10" className={`mr-3 size-[10px] shrink-0 ${kind === "r" ? "invisible" : ""}`}><path d="M0 0l10 5-10 5z" fill="#5f5f5f" /></svg>
              <span className="mr-[7px] flex w-[42px] shrink-0 justify-center">{kind === "q" ? <Q /> : kind === "d" ? <Db /> : <Raster />}</span>
              <span className="text-[26px] tracking-[-0.4px] whitespace-nowrap">{name}</span>
            </li>
          ))}
        </ul>
        <div className="h-[306px] w-4 rounded-[4px] bg-[#363636] px-[2px] pt-8"><div className="h-[34px] rounded-[3px] bg-[#727272]" /></div>
      </div>
      <div className="ml-px h-4 w-[308px] rounded-[4px] bg-[#363636] p-[2px]"><div className="h-3 w-[114px] rounded-[3px] bg-[#727272]" /></div>
    </div>
  </section>
);

const Clock = () => (
  <div className="absolute top-[4px] left-[277px] flex h-[37px] w-[37px] items-center justify-center rounded-[4px] border-[1.500px] border-[#6f6f6f] bg-[#c2c2c2]">
    <svg viewBox="0 0 26 26" className="size-[26px]"><circle cx="13" cy="13" r="11.500" fill="none" stroke="#666" strokeWidth="1.700" /><path d="M12 6v8l6 2" stroke="#666" strokeWidth="2" fill="none" /></svg>
  </div>
);
const LayerRow = ({ icon, name, child = false, sel = false, clock = false, bold = true }: { icon: N; name: string; child?: boolean; sel?: boolean; clock?: boolean; bold?: boolean }) => (
  <li className={`relative flex h-11 items-center overflow-hidden ${sel ? "bg-[#f0f0f0]" : ""}`}>
    {child ? <span className="w-[88px] shrink-0" /> : <span className="flex w-[48px] shrink-0 pl-[14px]"><Tri className="h-[11px] w-3 text-[#5f5f5f]" /></span>}
    <Check />
    <span className="flex w-[58px] shrink-0 items-center justify-center">{icon}</span>
    <span className={`text-[25px] whitespace-nowrap ${bold ? "font-bold" : "tracking-[0.3px]"} ${sel ? "tracking-[0.5px] underline decoration-[3px] underline-offset-4" : bold ? "tracking-[1px]" : ""}`}>{name}</span>
    {clock && <Clock />}
  </li>
);
const Layers = () => (
  <section className="h-[576px]">
    <header className="flex h-[62px] items-center pt-[2px] pr-[5px]">
      <h2 className="flex-1 pr-[25px] text-center text-[22px] tracking-[0.1px]">Layers</h2>
      <CloseBox />
    </header>
    <div className="-mt-[5px] flex h-[50px] items-center pl-1">
      <div className="flex h-[50px] w-[50px] items-center justify-center rounded-[5px] border-2 border-[#f2f2f2]"><Svg className="size-[29px]"><Brush /></Svg></div>
      <Svg className="ml-3 size-7"><Clip /><Plus x={27} y={28} s={20} /></Svg>
      <Svg className="ml-[23px] size-[30px]">
        <path d="M1 14Q20 2 44 12" stroke="#999" strokeWidth="2" /><path d="M1 28Q22 4 47 28 24 46 1 28z" fill="#fff" stroke="#555" strokeWidth="2" /><circle cx="24" cy="25" r="11" fill="#6d97c6" stroke="#3c5a78" strokeWidth="2" /><circle cx="24" cy="24" r="5" fill="#111" />
      </Svg>
      <Tri className="mt-5 -ml-px h-2 w-2 text-[#b5b5b5]" />
      <Svg className="ml-[17px] size-7"><Funnel /></Svg>
      <Tri className="mt-5 ml-px h-2 w-2 text-[#b5b5b5]" />
      <Svg className="ml-[18px] size-7"><Eps x={-1} y={29} size={38} /><rect x="24" y="24" width="24" height="24" rx="4" fill="#8d8d8d" /><path d="M26 26h20l-7 9v11h-6V35z" fill="#f4f4f4" /></Svg>
      <Tri className="ml-[15px] h-2 w-2 text-[#b5b5b5]" />
      <More className="ml-[36px]" />
    </div>
    <div className="mt-[5px] h-[464px] w-[334px] rounded-[4px] border-2 border-[#3a3a3a] bg-[#b2b2b2]">
      <ul className="h-[443px] w-[329px] overflow-hidden pt-1">
        <LayerRow bold={false} name="sample_gps_tracks" icon={<Svg className="mb-1 size-[27px]"><Clip /></Svg>} />
        <LayerRow child sel name="label" icon={<Svg className="size-7"><Pencil dx={2} /></Svg>} />
        <LayerRow child clock name="track_points" icon={<span className="size-2 rounded-full bg-[#23e6de]" />} />
        <LayerRow child clock name="track_points" icon={<span className="size-[3px] rounded-full bg-[#9cc6d6]" />} />
        <LayerRow child name="tracks" icon={<span className="h-[2px] w-8 bg-[#8aa5ba]" />} />
        <LayerRow name="Dark Matter [no labels]" icon={<Raster />} />
      </ul>
      <div className="h-4 w-[329px] rounded-[4px] bg-[#363636] p-[2px]"><div className="h-3 w-[242px] rounded-[3px] bg-[#727272]" /></div>
    </div>
  </section>
);

const sideIcons: N[] = [
  <Svg className="size-[42px]"><Brush /></Svg>,
  <AbcTag />,
  <AbcHalo halo="#e9efff" className="h-9 w-14" />,
  <Svg className="size-[44px]">
    <path d="M24 1l18 14-18 12L6 15z" fill="#f58f8f" stroke="#c00d0d" strokeWidth="2" />
    <path d="M4 18l19 12v17L4 36z" fill="#8ae234" stroke="#4e9a06" strokeWidth="2" /><path d="M44 18L25 30v17l19-11z" fill="#fce94f" stroke="#c6a000" strokeWidth="2" />
  </Svg>,
  <Svg className="size-[46px]">
    <path d="M10 9v24M38 9v24M24 17v22" stroke="#c78a2c" strokeWidth="4" />
    <rect x="14" y="1" width="20" height="14" fill="#ef5350" /><path d="M14 14h20l-5 5H19zM1 34q1-5 8-5t11 5zM28 34q1-5 10-5t9 5z" fill="#c07a1a" />
    <rect x="1" y="34" width="20" height="13" fill="#fce94f" /><rect x="27" y="34" width="20" height="13" fill="#8db8ea" />
  </Svg>,
  <Svg className="size-[38px]"><path d="M3 18C3 8 12 5 20 6V0l9 11-9 10v-6c-7-1-9 3-5 9l-4 4c-5-2-8-5-8-10z" fill="#8fc893" stroke="#5a9a5a" strokeWidth="1.500" /><path d="M45 32C46 22 36 20 29 21v-5L18 26l11 12v-6c6 0 8 4 3 10l0 6c8-1 13-8 13-16z" fill="#e8823a" stroke="#c05e1a" strokeWidth="1.500" /></Svg>,
];

const Tab = ({ children, className = "w-[92px]" }: { children: N; className?: string }) => (
  <div className={`${className} flex h-[49px] shrink-0 items-center justify-center overflow-hidden border-t-2 border-r-2 border-b-2 border-[#3a3a3a] pb-[2px] pl-[3px]`}>{children}</div>
);
const SHIELD = "M5 3l4 3 6-3 6 3 6-3 6 3 4-3c1 3 4 8 4 14 0 14-8 21-20 27C9 38 1 31 1 17 1 11 4 6 5 3z";
const glyph = { fontSize: 22, fontWeight: "bold", fontFamily: "Open Sans, sans-serif", fill: "#2e3436", stroke: "#9a9a9a", strokeWidth: 2, paintOrder: "stroke" } as const;

const Field = ({ label, children, className = "h-16", drop = true, pad = "pl-[10px]" }: { label: string; children: N; className?: string; drop?: boolean; pad?: string }) => (
  <div className={`${className} flex items-center`}>
    <span className={`w-[128px] shrink-0 pt-[2px] text-[25px] tracking-[0.4px] ${pad}`}>{label}</span>
    {children}
    <span className="ml-5"><Override drop={drop} /></span>
  </div>
);

const Styling = () => (
  <aside className="flex w-[812px] shrink-0 flex-col pl-6">
    <header className="flex h-10 items-center">
      <h2 className="flex-1 pr-[32px] text-center text-[22px]">Layer Styling</h2>
      <div className="-mr-1"><CloseBox /></div>
    </header>
    <DarkBox className="mt-[6px] h-12 w-[788px] text-[25px]">
      <Svg className="ml-2 size-7"><circle cx="7" cy="41" r="3.500" fill="#ddd" stroke="#777" strokeWidth="2" /><circle cx="14" cy="18" r="3.500" fill="#ddd" stroke="#777" strokeWidth="2" /><circle cx="38" cy="7" r="3.500" fill="#ddd" stroke="#777" strokeWidth="2" /></Svg>
      <span className="ml-[14px] tracking-[0.4px]">label</span>
      <Tri className="mr-[9px] ml-auto h-2 w-2" />
    </DarkBox>
    <div className="mt-[14px] flex">
      <nav className="ml-[2px] h-[890px] w-[76px] shrink-0 rounded-[4px] bg-[#373737] px-1 pt-1">
        {sideIcons.map((ic, i) => <div key={i} className={`flex h-[60px] items-center justify-center ${i === 1 ? "bg-[#f0f0f0]" : ""}`}>{ic}</div>)}
      </nav>
      <div className="flex w-[710px] flex-col">
        <div className="mt-[14px] ml-3 flex">
          <DarkBox className="h-[48px] w-[632px] text-[25px]">
            <span className="ml-2"><AbcTag className="h-[17px] w-[29px]" /></span><span className="ml-[13px] pt-px tracking-[0.3px]">Single Labels</span><Tri className="mr-[9px] ml-auto h-2 w-2" />
          </DarkBox>
          <Btn className="ml-[12px] size-[49px]"><Svg className="size-8"><path d="M14 0l17 17-17 17L-3 17z" fill="#5f8297" opacity=".55" /><path d="M14 1l6 7h-4v5h-4V8H8zM-3 17l7-6v4h5v4H4v4zM14 33l6-7h-4v-5h-4v5H8z" fill="#4f7f9c" /><g transform="translate(9 11) scale(.9)">{[0, 45, 90, 135, 180, 225, 270, 315].map((r) => <path key={r} d="M20 12V1h8v11z" transform={`rotate(${r} 24 24)`} fill="#fce94f" stroke="#c6a000" strokeWidth="2" />)}<circle cx="24" cy="24" r="14" fill="#fce94f" /><circle cx="24" cy="24" r="5.500" fill="#929292" stroke="#c6a000" strokeWidth="3" /></g></Svg></Btn>
        </div>
        <div className="mt-[17px] flex items-center">
          <span className="w-[116px] shrink-0 pt-[3px] pl-[24px] text-[25px] tracking-[0.4px]">Value</span>
          <div className="flex h-[49px] w-[523px] items-center overflow-hidden rounded-[6px] border-2 border-[#3c3c3c] bg-[#b2b2b2]">
            <div className="ml-[3px] flex h-full w-[478px] items-center justify-end overflow-hidden"><span className="pt-[3px] text-[26px] tracking-[-0.05px] whitespace-nowrap italic">rs 30 mins'),'dd MMM,yyyy| hh:mm:ss')</span></div>
            <DropBtn />
          </div>
          <Btn className="ml-[13px] size-[49px]"><Svg className="size-8"><Eps x={10} y={38} size={40} fill="#6b4a73" /></Svg></Btn>
        </div>
        <div className="relative mt-[21px] ml-5 flex h-[59px] w-[678px] items-end">
          <div className="flex h-[59px] w-[93px] shrink-0 items-center justify-center border-2 border-b-0 border-[#3a3a3a] pl-[2px]"><AbcHalo halo="#8e8e8e" fs={17.5} w={2.5} /></div>
          <Tab><Svg className="size-9"><text x="18" y="17" {...glyph}>ab</text><text x="33" y="44" {...glyph}>c</text><path d="M7 6v14M1 13h12M13 31L3 37l10 6" stroke="#a5a5a5" strokeWidth="2.500" /></Svg></Tab>
          <Tab><AbcHalo halo="#8fb0ff" fs={17.5} /></Tab>
          <Tab><AbcHalo halo="#eef2ff" fs={17.5} w={8} /></Tab>
          <Tab><Svg className="size-[38px]"><g transform="translate(3 1)"><path d={SHIELD} fill="#0b73bd" stroke="#222" strokeWidth="1.500" /><path d="M5 3l4 3 6-3 6 3 6-3 6 3 4-3 3 8H2z" fill="#e02020" /></g></Svg></Tab>
          <Tab><Svg className="size-[38px]"><path d={SHIELD} fill="#222" transform="translate(8 5)" /><path d={SHIELD} fill="#eef3ff" stroke="#b9cdf5" strokeWidth="2" transform="translate(3 0)" /></Svg></Tab>
          <Tab className="w-[64px]"><Svg className="ml-7 size-9"><text x="2" y="17" {...glyph}>abc</text><path d="M5 46L20 22" stroke="#a5a5a5" strokeWidth="6" /><path d="M5 46L20 22" stroke="#2e3436" strokeWidth="3" /></Svg></Tab>
          <div className="-ml-px flex h-[59px] w-[32px] shrink-0 items-center justify-center rounded-[5px] border-2 border-[#3a3a3a] bg-[#777]"><svg viewBox="0 0 8 14" className="h-[14px] w-2"><path d="M8 0v14L0 7z" fill="#999" /></svg></div>
          <div className="-ml-px flex h-[59px] w-[31px] shrink-0 items-center justify-center rounded-[5px] border-2 border-[#3a3a3a] bg-gradient-to-b from-[#a0a0a0] to-[#878787]"><svg viewBox="0 0 8 14" className="h-[14px] w-2"><path d="M0 0v14l8-7z" fill="#333" /></svg></div>
          <div className="absolute -top-[4px] left-[89px] h-[76px] w-[98px] rounded-[50%] border-[6px] border-[#ff2d6f]" />
        </div>

        <div className="mt-[33px] ml-7 flex h-[552px]">
          <div className="relative w-[646px] shrink-0">
            <div className="flex h-[44px] items-center pl-[10px] text-[25px] tracking-[0.2px]">Text</div>
            <Field label="Font">
              <div className="flex h-[47px] w-[444px] shrink-0 items-center rounded-[6px] border-2 border-[#3c3c3c] bg-[#b2b2b2] pl-2 text-[25px] tracking-[0.1px]"><span className="pt-px">Helvetica</span><DropBtn /></div>
            </Field>
            <Field label="Style" className="h-24">
              <DarkBox className="h-[47px] w-[444px] pl-[6px] text-[25px] tracking-[0.4px]">Light Oblique<Tri className="mr-[9px] ml-auto h-2 w-2" /></DarkBox>
            </Field>
            <div className="-mt-2 flex h-[48px] items-center pl-[128px]">
              <Btn className="size-[47px]"><span className="text-[25px] underline underline-offset-4">U</span></Btn><span className="ml-[20px]"><Override /></span>
              <Btn className="ml-[15px] size-[47px]"><span className="text-[25px] line-through">S</span></Btn><span className="ml-[20px]"><Override /></span>
              <Btn off className="ml-[15px] size-[47px]"><span className="text-[25px]">B</span></Btn><span className="ml-[20px]"><Override /></span>
              <Btn off className="ml-[15px] size-[47px]"><span className="text-[25px] italic">I</span></Btn><span className="ml-5"><Override /></span>
            </div>
            <Field label="Size" className="mt-2 h-16">
              <DarkBox className="h-[47px] w-[444px] pl-[8px] text-[25px] tracking-[0.7px]">30.0000<Spin /></DarkBox>
            </Field>
            <Field label="">
              <DarkBox className="h-[47px] w-[444px] pl-[6px] text-[25px] tracking-[0.7px]">Points<Tri className="mr-[9px] ml-auto h-2 w-2" /></DarkBox>
            </Field>
            <Field label="Color" pad="pl-[13px]">
              <div className="flex h-[51px] w-[444px] shrink-0 rounded-[6px] border-2 border-[#3c3c3c] bg-[#505050]">
                <div className="mt-[10px] ml-1 h-[27px] w-[408px] bg-[#989694]" />
                <div className="flex flex-1 items-center justify-center rounded-[5px] border-l-2 border-[#3c3c3c]"><Tri /></div>
              </div>
            </Field>
            <Field label="Opacity">
              <div className="flex w-[244px] shrink-0 items-center pl-[2px]">
                <div className="h-4 w-[190px] rounded-l-[4px] border-2 border-[#3c3c3c] bg-[#b2b2b2]" />
                <div className="-ml-[2px] h-5 w-[45px] rounded-[4px] border-2 border-[#3c3c3c] bg-gradient-to-br from-[#a5a5a5] to-[#8a8a8a]" />
              </div>
              <DarkBox className="h-[47px] w-[200px] pl-2 text-[25px] tracking-[0.9px]">100.0 %<Spin /></DarkBox>
            </Field>
            <div className="mt-[5px] flex h-[38px] items-center pl-1"><Check on={false} /><span className="ml-[14px] pt-px text-[25px] tracking-[0.35px]">Allow HTML formatting</span></div>
            <div className="pointer-events-none absolute top-[42px] left-[1px] h-[144px] w-[592px] rounded-[2px] border-[6px] border-[#ff2d6f]" />
            <div className="pointer-events-none absolute top-[244px] left-[2px] h-[77px] w-[588px] rounded-[2px] border-[6px] border-[#ff2d6f]" />
          </div>
          <div className="h-[552px] w-4 rounded-[4px] bg-[#373737]"><div className="h-[339px] rounded-[4px] border-2 border-[#373737] bg-[#727272]" /></div>
        </div>
        <div className="ml-7 h-[16px] w-[645px] rounded-[4px] bg-[#373737]"><div className="h-[16px] w-[632px] rounded-[4px] border-2 border-[#373737] bg-[#727272]" /></div>
        <div className="mt-[32px] ml-2 flex items-center">
          <Btn className="size-[50px]"><Svg className="size-6"><Undo /></Svg></Btn>
          <Btn className="ml-3 size-[50px]"><Svg className="size-6"><g transform="matrix(-1 0 0 1 48 0)"><Undo c="#8fc893" d="#5a9a5a" /></g></Svg></Btn>
          <div className="ml-auto flex items-center"><Check /><span className="mr-[14px] ml-[14px] pt-[3px] text-[25px] tracking-[0.4px]">Live update</span><Btn className="h-12 w-[86px]"><span className="text-[26px] tracking-[-0.3px]">Apply</span></Btn></div>
        </div>
      </div>
    </div>
  </aside>
);

const Status = () => (
  <footer className="flex h-[56px] items-center overflow-hidden pt-[14px] pl-[6px] text-[22px]">
    <div className="flex h-[50px] w-[428px] shrink-0 items-center rounded-[6px] border-2 border-[#3c3c3c] bg-[#b2b2b2] pl-4 text-[25px] text-[#5a5a5a]">
      <svg viewBox="0 0 24 24" className="size-6 text-[#8d8d8d]" fill="none" stroke="currentColor" strokeWidth="2"><circle cx="9.500" cy="9.500" r="8.500" /><path d="M16 16l7 7" /></svg>
      <span className="ml-5 tracking-[0.3px]">Type to locate (⌘K)</span>
    </div>
    <span className="ml-[69px] w-[36px] shrink-0">rdi</span>
    <div className="flex h-[44px] w-[237px] shrink-0 items-center justify-center rounded-[6px] border-2 border-[#3c3c3c] bg-[#b2b2b2]"><span className="tracking-[0.85px]">23.0284°,72.513°</span></div>
    <Svg className="ml-[8px] size-9"><path d="M4 9Q4 1 12 1t11 8l2 8q10 3 10 15T23 47q-12 0-12-13v-4Q3 22 4 9z" fill="#fff" stroke="#111" strokeWidth="3" /><path d="M9 3l6 20M16 2l4 16M11 30q4-9 14-12" stroke="#111" strokeWidth="3.500" /><circle cx="23" cy="35" r="6" stroke="#111" strokeWidth="3.500" /><circle cx="23" cy="35" r="1.500" fill="#111" /><path d="M26 10h4M33 7h2M36 2h3M0 26h3" stroke="#111" strokeWidth="2.500" /></Svg>
    <span className="ml-[24px] w-[5px] shrink-0 overflow-hidden">a</span>
    <div className="ml-[10px] flex h-[46px] w-[171px] shrink-0 items-center rounded-[6px] border-2 border-[#3c3c3c] bg-[#b2b2b2] pl-2 tracking-[0.2px]">1:56745<DropBtn /></div>
    <svg viewBox="0 0 24 30" className="ml-6 h-[30px] w-6 shrink-0"><path d="M5 15V9q0-7 7-7t7 7v6" fill="none" stroke="#e8e8e8" strokeWidth="3" /><rect y="14" width="24" height="15" rx="2" fill="#606060" /></svg>
    <span className="ml-6 w-[18px] shrink-0">n</span>
    <DarkBox className="h-[50px] w-[186px] pl-2 tracking-[0.3px]">100%<Spin /></DarkBox>
    <span className="ml-5 w-[5px] shrink-0 overflow-hidden"><span className="-ml-2">a</span></span>
    <DarkBox className="ml-[19px] h-[50px] w-[186px] pl-[9px] tracking-[0.3px]">0.0 °<Spin /></DarkBox>
    <span className="ml-[14px]"><Check /></span><span className="ml-[14px] w-[74px] shrink-0 tracking-[-0.1px]">Render</span>
    <svg viewBox="0 0 28 28" className="ml-[27px] size-7 shrink-0" fill="none" stroke="#e5e5e5" strokeWidth="1.600"><circle cx="14" cy="13" r="11" fill="#999" /><ellipse cx="14" cy="13" rx="5" ry="11" /><path d="M14 2v22M4 8h20M3 13h22M4 19h20" /></svg>
    <span className="ml-[8px] w-[120px] shrink-0 tracking-[0.1px] whitespace-nowrap">EPSG:4326</span>
    <svg viewBox="0 0 32 34" className="ml-[45px] h-[34px] w-8 shrink-0"><path d="M16 2a15 14 0 1 0 6 26q2 4 7 5-3-4-3-8A15 14 0 0 0 16 2z" fill="#5a5a5a" /><circle cx="9" cy="16" r="2.300" fill="#fff" /><circle cx="16" cy="16" r="2.300" fill="#fff" /><circle cx="23" cy="16" r="2.300" fill="#fff" /></svg>
  </footer>
);

export default function App() {
  return (
    <div className="flex h-[1344px] w-[1948px] flex-col overflow-hidden bg-[#727272] font-['Inter',sans-serif] text-[#0d0d0d]">
      <header className="flex h-[52px] shrink-0 items-center border-b-2 border-[#4a4a4a] bg-[#f0edec] pl-[14px]">
        <div className="flex w-[104px] gap-4 pb-[2px]">
          <span className="size-6 rounded-full border border-[#e2443d] bg-[#ff5f57]" />
          <span className="size-6 rounded-full border border-[#dea123] bg-[#febc2e]" />
          <span className="size-6 rounded-full border border-[#1aab29] bg-[#28c840]" />
        </div>
        <h1 className="flex-1 pr-[114px] pb-[4px] text-center text-[26px] font-bold tracking-[0.2px] text-[#474442]">*Untitled Project — QGIS</h1>
      </header>

      <div className="flex h-[76px] shrink-0 items-center">
        <Sep />{row1a.map((c, i) => <Slot key={i}>{c}</Slot>)}
        <Sep className="w-4" />{row1b.map((c, i) => <Slot key={i}>{c}</Slot>)}
        <Sep className="w-12" />{row1c.map((c, i) => <Slot key={i}>{c}</Slot>)}
        <More className="mr-[2px] ml-auto" />
      </div>
      <div className="flex h-20 shrink-0 items-center">
        <Sep />{row2a.map((c, i) => <Slot key={i}>{c}</Slot>)}
        <Sep className="w-4" />
        <Slot className="w-[62px]"><Pencil dx={-2} a="#b5623f" b="#b98a5a" o={0.8} /><Pencil dx={8} /></Slot>
        <Tri className="mt-[38px] -ml-[7px] h-2 w-2 text-[#b5b5b5]" />
        <div className="ml-[8px] flex h-[66px] w-[65px] shrink-0 items-center justify-center rounded-[6px] border-2 border-[#f4f4f4]"><Svg><Pencil a="#c2b02a" b="#f5ee85" /></Svg></div>
        <Slot className="w-[70px]">{Floppy}</Slot>
        <div className="mr-[3px] flex h-[66px] w-[89px] shrink-0 items-center rounded-[6px] border-2 border-[#f4f4f4] pl-[6px]">
          <Svg><path d="M12 38L34 11" stroke="#8fc893" strokeWidth="3" strokeDasharray="7 3.500" /><path d="M4 36h7v7H4zM36 4h7v7h-7z" fill="#ccc" stroke="#aaa" /></Svg>
          <Tri className="ml-[17px] h-2 w-2 text-[#b5b5b5]" />
        </div>
        <div className="flex h-[66px] w-[66px] shrink-0 items-center justify-center rounded-[6px] border-2 border-[#f4f4f4]"><Svg><Pts /><Star x={25} /></Svg></div>
        <Slot className="w-[69px]">
          <path d="M14 13h26M12 16L4 45" stroke="#505050" strokeWidth="2.500" /><rect x="9" y="6" width="10" height="11" fill="#ddd" stroke="#444" strokeWidth="2" /><path d="M11 8l6 7M17 8l-6 7" stroke="#444" strokeWidth="1.500" />
          <path d="M18 28q2-8 12-11l2 3-8 9z" fill="#d5d5d5" stroke="#666" /><path d="M26 28l17 16-5 5-15-17z" fill="#b8680a" /><path d="M43 18L31 33" stroke="#ccc" strokeWidth="1.800" /><path d="M31 33L20 46" stroke="#c6a000" strokeWidth="6.500" strokeLinecap="round" /><path d="M31 33L20 46" stroke="#fce23e" strokeWidth="4" strokeLinecap="round" />
        </Slot>
        <Drop />
        <Slot className="ml-1 w-[68px]"><g opacity=".4"><path d="M4 7h36v8H4zM4 21h36v8H4zM4 35h36v8H4z" fill="#958a68" stroke="#777055" strokeWidth="2" /><Pencil a="#8b8078" b="#9b9088" dx={6} /></g></Slot>
        <More className="mr-[5px] ml-[66px]" />
        <Sep className="w-4" />
        <Slot className="w-[68px]"><rect x="3" y="4" width="41" height="40" fill="#e8e8e8" stroke="#222" strokeWidth="1.800" strokeDasharray="3.500 2.500" /><Box x={5} y={6} /><Cursor x={20} y={18} s={1} /></Slot>
        <Drop />
        <Slot className="ml-[3px] w-[68px]"><Box x={15} y={18} /><Eps x={3} y={32} size={38} /></Slot>
        <Drop className="w-[22px]" />
        <Slot className="ml-[4px] w-[68px]"><Box x={3} y={6} /><Box x={11} y={14} /><rect x="26" y="27" width="21" height="21" rx="2" fill="#c00d0d" /><circle cx="36.500" cy="37.500" r="7.500" fill="#e06a6a" stroke="#fff" strokeWidth="2.800" /><path d="M31.500 42.500l10-10" stroke="#fff" strokeWidth="2.800" /></Slot>
        <Drop />
        <Slot className="ml-[3px] w-[68px]"><Box x={4} y={5} /><path d="M38 26a6 6.500 0 0 1 6 7q0 4-6 13-6-9-6-13a6 6.500 0 0 1 6-7z" fill="#7396ae" stroke="#4f7a96" strokeWidth="1.200" /><circle cx="38" cy="32.500" r="3" fill="#727272" /></Slot>
      </div>
      <div className="flex h-[76px] shrink-0 items-center">
        <Sep />
        <Slot><path d="M32 3h12v41H32z" fill="#f5e05a" stroke="#b59a1c" /><path d="M38 9h6M38 15h6M38 21h6M38 27h6" stroke="#7a6600" strokeWidth="2" /><path d="M1 1l46 46H1z" fill="#fc9d6b" stroke="#7a4126" strokeWidth="1.800" /><path d="M11 25v12h12z" fill="#727272" stroke="#7a4126" strokeWidth="1.800" /></Slot>
        <Slot><g transform="translate(3 0)"><Pts /></g><NavyBadge><path d="M4 8h7V4l8 7-8 7v-4H4z" fill="#fff" /></NavyBadge></Slot>
        <Drop className="mr-[3px] w-[22px]" />
        {row3.map((c, i) => <Slot key={i}>{c}</Slot>)}
        <Drop />
      </div>

      <main className="flex h-[1004px] shrink-0">
        <div className="w-[334px] shrink-0"><Browser /><Layers /></div>
        <div className="ml-4 pt-[6px]"><MapView /></div>
        <Styling />
      </main>
      <Status />
    </div>
  );
}
